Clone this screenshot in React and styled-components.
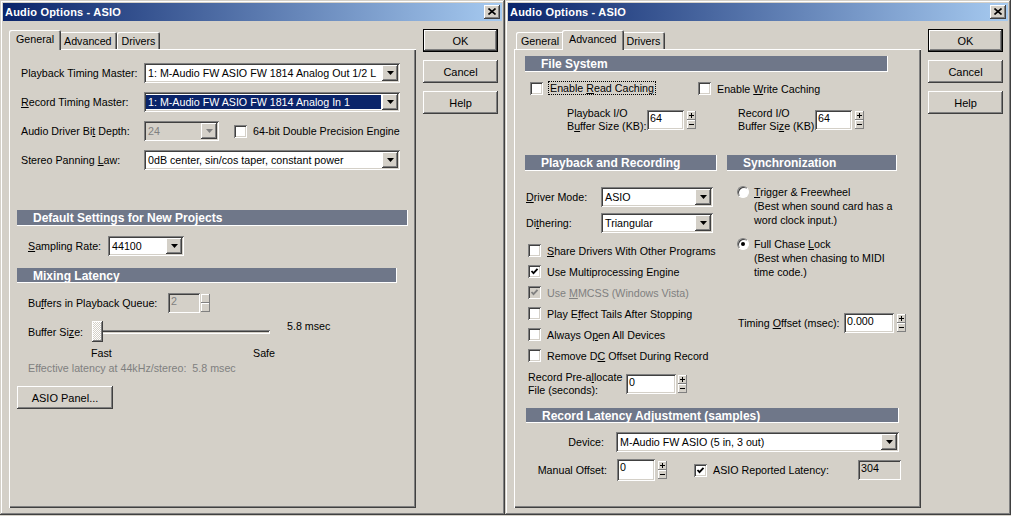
import { createGlobalStyle, styled, css } from 'styled-components';

const FACE = '#d4d0c8';
const BAR = '#6f7789';

const GlobalStyle = createGlobalStyle`
  * { box-sizing: border-box; }
  html, body { margin: 0; padding: 0; }
  body {
    background: ${FACE};
    font-family: "Liberation Sans", Arial, sans-serif;
    font-size: 10.7px;
    color: #000;
  }
`;

// classic 3d edges
const raised = css`
  background: ${FACE};
  box-shadow: inset -1px -1px #404040, inset 1px 1px #ffffff, inset -2px -2px #808080, inset 2px 2px ${FACE};
`;
const sunken = css`
  box-shadow: inset 1px 1px #808080, inset -1px -1px #ffffff, inset 2px 2px #404040, inset -2px -2px ${FACE};
`;

const Desktop = styled.div`
  display: flex;
  width: 1011px;
  height: 516px;
  overflow: hidden;
`;
const Window = styled.div`
  width: ${p => p.$width}px;
  height: 515px;
  padding: 3px;
  background: ${FACE};
  box-shadow: inset -1px -1px #404040, inset 1px 1px ${FACE}, inset -2px -2px #808080, inset 2px 2px #ffffff;
  display: flex;
  flex-direction: column;
`;
const TitleBar = styled.div`
  height: 18px;
  display: flex;
  align-items: center;
  justify-content: space-between;
  padding: 0 2px;
  background: linear-gradient(to right, #0a246a, #a6caf0);
`;
const Title = styled.span`
  color: #fff;
  font-weight: bold;
  font-size: 11px;
  letter-spacing: 0.2px;
`;
const CloseButton = styled.span`
  width: 16px;
  height: 14px;
  ${raised};
  display: flex;
  align-items: center;
  justify-content: center;
  padding-bottom: 1px;
`;
const Body = styled.div`
  display: flex;
  padding: 9px 0 0 6px;
  gap: 7px;
`;
const TabArea = styled.div`
  width: 407px;
  display: flex;
  flex-direction: column;
`;
const TabStrip = styled.div`
  display: flex;
  align-items: flex-end;
  height: 19px;
  padding-left: 2px;
  position: relative;
  z-index: 1;
`;
const Tab = styled.div`
  height: 17px;
  padding: 0 5px;
  display: flex;
  align-items: center;
  background: ${FACE};
  border-radius: 2px 2px 0 0;
  box-shadow: inset 1px 1px #ffffff, inset -1px 0 #404040, inset -2px 0 #808080;
  ${p => p.$active && css`
    height: 20px;
    margin: 0 -2px -1px;
    padding: 0 7px 3px;
    z-index: 2;
  `}
`;
const Panel = styled.div`
  height: 459px;
  background: ${FACE};
  box-shadow: inset 1px 1px #ffffff, inset -1px -1px #404040, inset -2px -2px #808080;
  display: flex;
  flex-direction: column;
  align-items: flex-start;
  padding: ${p => p.$pt}px 0 0 ${p => p.$pl}px;
`;
const ButtonColumn = styled.div`
  display: flex;
  flex-direction: column;
  gap: 8px;
  margin-top: -1px;
`;
const PushButton = styled.div`
  width: ${p => p.$w || 75}px;
  height: 23px;
  display: flex;
  align-items: center;
  justify-content: center;
  font-size: 11px;
  ${raised};
  margin-top: ${p => p.$mt || 0}px;
  ${p => p.$default && css`
    box-shadow: inset 0 0 0 1px #000, inset -2px -2px #404040, inset 2px 2px #ffffff, inset -3px -3px #808080;
  `}
`;

const FieldRow = styled.div`
  display: flex;
  align-items: center;
  height: ${p => p.$h || 20}px;
  margin-top: ${p => p.$mt || 0}px;
  margin-left: ${p => p.$ml || 0}px;
  white-space: nowrap;
`;
const FieldLabel = styled.span`
  width: ${p => p.$w}px;
  flex-shrink: 0;
  text-align: ${p => (p.$right ? 'right' : 'left')};
  padding-right: ${p => p.$pr || 0}px;
  color: ${p => (p.$dim ? '#808080' : '#000')};
`;
const LabelStack = styled.div`
  width: ${p => p.$w}px;
  flex-shrink: 0;
  line-height: 13px;
  margin-left: ${p => p.$ml || 0}px;
  display: flex;
  flex-direction: column;
`;
const SectionBar = styled.div`
  width: ${p => p.$w}px;
  height: ${p => p.$h || 16}px;
  margin-top: ${p => p.$mt || 0}px;
  margin-left: ${p => p.$ml || 0}px;
  background: ${BAR};
  box-shadow: inset -1px -1px #ffffff;
  color: #fff;
  font-weight: bold;
  font-size: 12px;
  display: flex;
  align-items: center;
  padding-left: 16px;
  white-space: nowrap;
`;

// combo box
const ComboBox = styled.div`
  width: ${p => p.$w}px;
  height: 20px;
  flex-shrink: 0;
  ${sunken};
  background-color: ${p => (p.$disabled ? FACE : '#fff')};
  display: flex;
  align-items: stretch;
  padding: 2px;
  margin-left: ${p => p.$ml || 0}px;
`;
const ComboText = styled.span`
  flex: 1;
  min-width: 0;
  display: flex;
  align-items: center;
  padding-left: 2px;
  margin: 1px 1px 1px 0;
  overflow: hidden;
  white-space: nowrap;
  color: ${p => (p.$selected ? '#fff' : p.$disabled ? '#808080' : '#000')};
  background: ${p => (p.$selected ? '#0a246a' : 'transparent')};
`;
const DropButton = styled.span`
  width: 16px;
  flex-shrink: 0;
  ${raised};
  display: flex;
  align-items: center;
  justify-content: center;
`;

function Combo({ width, value, disabled, selected, ml }) {
  return (
    <ComboBox $w={width} $disabled={disabled} $ml={ml}>
      <ComboText $selected={selected} $disabled={disabled}>{value}</ComboText>
      <DropButton>
        <svg width="7" height="4" viewBox="0 0 7 4">
          <polygon points="0,0 7,0 3.5,4" fill={disabled ? '#808080' : '#000'} />
        </svg>
      </DropButton>
    </ComboBox>
  );
}

// edit box + spinner
const TextBox = styled.div`
  width: ${p => p.$w}px;
  height: ${p => p.$h || 20}px;
  flex-shrink: 0;
  ${sunken};
  background-color: ${p => (p.$disabled || p.$readonly ? FACE : '#fff')};
  color: ${p => (p.$disabled ? '#808080' : '#000')};
  padding: 2px 3px;
  line-height: 13px;
  margin-left: ${p => p.$ml || 0}px;
`;
const SpinBox = styled.div`
  width: 9px;
  height: 18px;
  margin-left: ${p => p.$ml || 2}px;
  display: flex;
  flex-direction: column;
`;
const SpinHalf = styled.span`
  flex: 1;
  background: ${FACE};
  box-shadow: inset -1px -1px #808080, inset 1px 1px #ffffff;
  display: flex;
  align-items: center;
  justify-content: center;
`;

function Spinner({ ml, disabled }) {
  const c = disabled ? '#a0a0a0' : '#000';
  return (
    <SpinBox $ml={ml}>
      <SpinHalf>
        {!disabled && (
          <svg width="5" height="5" viewBox="0 0 5 5">
            <path d="M0 2.5H5M2.5 0V5" stroke={c} strokeWidth="1" />
          </svg>
        )}
      </SpinHalf>
      <SpinHalf>
        {!disabled && (
          <svg width="5" height="5" viewBox="0 0 5 5">
            <path d="M0 2.5H5" stroke={c} strokeWidth="1" />
          </svg>
        )}
      </SpinHalf>
    </SpinBox>
  );
}

// checkbox
const CheckItem = styled.label`
  display: flex;
  align-items: center;
  height: 13px;
  gap: 6px;
  width: ${p => (p.$w ? `${p.$w}px` : 'auto')};
  margin-top: ${p => p.$mt || 0}px;
  margin-left: ${p => p.$ml || 0}px;
  white-space: nowrap;
  color: ${p => (p.$disabled ? '#808080' : '#000')};
`;
const CheckBoxSquare = styled.span`
  width: 13px;
  height: 13px;
  flex-shrink: 0;
  ${sunken};
  background-color: ${p => (p.$disabled ? FACE : '#fff')};
  display: flex;
  align-items: center;
  justify-content: center;
`;
const Focus = styled.span`
  outline: 1px dotted #000;
  padding: 0 1px;
  line-height: 13px;
`;

function Check({ checked, disabled, children, ...rest }) {
  return (
    <CheckItem $disabled={disabled} {...rest}>
      <CheckBoxSquare $disabled={disabled}>
        {checked && (
          <svg width="9" height="9" viewBox="0 0 9 9">
            <path d="M1.5 4 L3.5 6.2 L7.5 1.8" fill="none" stroke={disabled ? '#808080' : '#000'} strokeWidth="1.8" />
          </svg>
        )}
      </CheckBoxSquare>
      <span>{children}</span>
    </CheckItem>
  );
}

// radio button
const RadioOption = styled.div`
  display: flex;
  align-items: flex-start;
  margin-top: ${p => p.$mt || 0}px;
  margin-left: ${p => p.$ml || 0}px;
  line-height: 14px;
`;
const RadioDot = styled.span`
  width: 12px;
  height: 12px;
  margin-top: 1px;
  flex-shrink: 0;
  border-radius: 50%;
  background: #fff;
  border: 1px solid;
  border-color: #808080 #ffffff #ffffff #808080;
  box-shadow: inset 1px 1px #404040;
  display: flex;
  align-items: center;
  justify-content: center;
  &::after {
    content: '';
    width: 4px;
    height: 4px;
    border-radius: 50%;
    background: ${p => (p.$checked ? '#000' : 'transparent')};
  }
`;
const RadioText = styled.div`
  margin-left: 5px;
  display: flex;
  flex-direction: column;
`;

// slider
const Slider = styled.div`
  width: ${p => p.$w}px;
  height: 21px;
  position: relative;
  display: flex;
  align-items: center;
  padding-left: 5px;
`;
const SliderTrack = styled.span`
  flex: 1;
  height: 4px;
  ${sunken};
  background: ${FACE};
`;
const SliderThumb = styled.span`
  position: absolute;
  left: 0;
  top: 0;
  width: 11px;
  height: 21px;
  background: repeating-conic-gradient(#ffffff 0 25%, ${FACE} 0 50%) 0 0 / 2px 2px;
  box-shadow: inset -1px -1px #404040, inset 1px 1px #ffffff, inset -2px -2px #808080;
`;
const Note = styled.span`
  margin-left: ${p => p.$ml || 0}px;
  align-self: flex-start;
  margin-top: ${p => p.$dy || 0}px;
`;
const ScaleRow = styled.div`
  display: flex;
  justify-content: space-between;
  width: ${p => p.$w}px;
  margin-left: ${p => p.$ml}px;
  margin-top: ${p => p.$mt}px;
  line-height: 13px;
`;
const Hint = styled.div`
  color: #808080;
  line-height: 13px;
  margin-left: ${p => p.$ml}px;
  margin-top: ${p => p.$mt}px;
  white-space: nowrap;
`;

const Columns = styled.div`
  display: grid;
  grid-template-columns: 192px 170px;
  column-gap: 10px;
  align-items: start;
  margin-top: ${p => p.$mt}px;
  margin-left: ${p => p.$ml}px;
`;
const Column = styled.div`
  display: flex;
  flex-direction: column;
  align-items: flex-start;
`;
const CheckList = styled.div`
  display: flex;
  flex-direction: column;
  gap: 8px;
  margin-top: ${p => p.$mt}px;
  margin-left: ${p => p.$ml}px;
`;
const LatencyRow = styled(FieldRow)`
  width: 375px;
`;
const ReadOnlyBox = styled(TextBox)`
  margin-left: auto;
`;

function CloseGlyph() {
  return (
    <svg width="8" height="7" viewBox="0 0 8 7">
      <path d="M0.5 0.5 L7.5 6.5 M7.5 0.5 L0.5 6.5" stroke="#000" strokeWidth="1.6" />
    </svg>
  );
}

function Frame({ width, active, children }) {
  return (
    <Window $width={width}>
      <TitleBar>
        <Title>Audio Options - ASIO</Title>
        <CloseButton><CloseGlyph /></CloseButton>
      </TitleBar>
      <Body>
        <TabArea>
          <TabStrip>
            {['General', 'Advanced', 'Drivers'].map(t => (
              <Tab key={t} $active={t === active}>{t}</Tab>
            ))}
          </TabStrip>
          {children}
        </TabArea>
        <ButtonColumn>
          <PushButton $default>OK</PushButton>
          <PushButton>Cancel</PushButton>
          <PushButton>Help</PushButton>
        </ButtonColumn>
      </Body>
    </Window>
  );
}

function GeneralPage() {
  return (
    <Panel $pt={14} $pl={8}>
      <FieldRow $ml={4}>
        <FieldLabel $w={123}>Playback Timing Master:</FieldLabel>
        <Combo width={256} value="1: M-Audio FW ASIO FW 1814 Analog Out 1/2 L" />
      </FieldRow>
      <FieldRow $ml={4} $mt={9}>
        <FieldLabel $w={123}><u>R</u>ecord Timing Master:</FieldLabel>
        <Combo width={256} value="1: M-Audio FW ASIO FW 1814 Analog In 1" selected />
      </FieldRow>
      <FieldRow $ml={4} $mt={9}>
        <FieldLabel $w={123}>Audio Driver Bi<u>t</u> Depth:</FieldLabel>
        <Combo width={75} value="24" disabled />
        <Check $ml={15}>64-bit Double Precision Engine</Check>
      </FieldRow>
      <FieldRow $ml={4} $mt={9}>
        <FieldLabel $w={123}>Stereo Panning <u>L</u>aw:</FieldLabel>
        <Combo width={256} value="0dB center, sin/cos taper, constant power" />
      </FieldRow>

      <SectionBar $w={391} $mt={40}>Default Settings for New Projects</SectionBar>
      <FieldRow $ml={11} $mt={10}>
        <FieldLabel $w={80}><u>S</u>ampling Rate:</FieldLabel>
        <Combo width={76} value="44100" />
      </FieldRow>

      <SectionBar $w={380} $h={15} $mt={12}>Mixing Latency</SectionBar>
      <FieldRow $ml={11} $mt={10}>
        <FieldLabel $w={140}>Bu<u>f</u>fers in Playback Queue:</FieldLabel>
        <TextBox $w={32} $disabled>2</TextBox>
        <Spinner ml={1} disabled />
      </FieldRow>
      <FieldRow $ml={11} $mt={8} $h={21}>
        <FieldLabel $w={64}>Buffer Si<u>z</u>e:</FieldLabel>
        <Slider $w={178}>
          <SliderTrack />
          <SliderThumb />
        </Slider>
        <Note $ml={17} $dy={-1}>5.8 msec</Note>
      </FieldRow>
      <ScaleRow $w={184} $ml={74} $mt={5}>
        <span>Fast</span>
        <span>Safe</span>
      </ScaleRow>
      <Hint $ml={11} $mt={2}>Effective latency at 44kHz/stereo:&nbsp; 5.8 msec</Hint>
      <PushButton $w={96} $mt={11}>ASIO Panel...</PushButton>
    </Panel>
  );
}

function AdvancedPage() {
  return (
    <Panel $pt={7} $pl={0}>
      <SectionBar $w={363} $ml={11}>File System</SectionBar>
      <FieldRow $ml={16} $mt={10} $h={13}>
        <Check $w={168}><Focus>Enable <u>R</u>ead Caching</Focus></Check>
        <Check>Enable <u>W</u>rite Caching</Check>
      </FieldRow>
      <FieldRow $ml={53} $mt={15}>
        <LabelStack $w={80}>
          <span>Playback I/O</span>
          <span>B<u>u</u>ffer Size (KB):</span>
        </LabelStack>
        <TextBox $w={37}>64</TextBox>
        <Spinner ml={3} />
        <LabelStack $w={77} $ml={42}>
          <span>Record I/O</span>
          <span>Buffer Si<u>z</u>e (KB):</span>
        </LabelStack>
        <TextBox $w={37}>64</TextBox>
        <Spinner ml={3} />
      </FieldRow>

      <Columns $mt={25} $ml={11}>
        <Column>
          <SectionBar $w={192}>Playback and Recording</SectionBar>
          <FieldRow $ml={1} $mt={16}>
            <FieldLabel $w={75}><u>D</u>river Mode:</FieldLabel>
            <Combo width={112} value="ASIO" />
          </FieldRow>
          <FieldRow $ml={1} $mt={6}>
            <FieldLabel $w={75}>Di<u>t</u>hering:</FieldLabel>
            <Combo width={112} value="Triangular" />
          </FieldRow>
          <CheckList $mt={11} $ml={3}>
            <Check><u>S</u>hare Drivers With Other Programs</Check>
            <Check checked>Use Multiprocessing Engine</Check>
            <Check checked disabled>Use <u>M</u>MCSS (Windows Vista)</Check>
            <Check>Play E<u>f</u>fect Tails After Stopping</Check>
            <Check>Always O<u>p</u>en All Devices</Check>
            <Check>Remove D<u>C</u> Offset During Record</Check>
          </CheckList>
          <FieldRow $ml={3} $mt={12}>
            <LabelStack $w={98}>
              <span>Record Pre-a<u>l</u>locate</span>
              <span>File (seconds):</span>
            </LabelStack>
            <TextBox $w={50}>0</TextBox>
            <Spinner ml={2} />
          </FieldRow>
        </Column>
        <Column>
          <SectionBar $w={170}>Synchronization</SectionBar>
          <RadioOption $ml={10} $mt={14}>
            <RadioDot />
            <RadioText>
              <span><u>T</u>rigger &amp; Freewheel</span>
              <span>(Best when sound card has a</span>
              <span>word clock input.)</span>
            </RadioText>
          </RadioOption>
          <RadioOption $ml={10} $mt={10}>
            <RadioDot $checked />
            <RadioText>
              <span>Full Chase <u>L</u>ock</span>
              <span>(Best when chasing to MIDI</span>
              <span>time code.)</span>
            </RadioText>
          </RadioOption>
          <FieldRow $ml={11} $mt={34}>
            <FieldLabel $w={106}>Timing <u>O</u>ffset (msec):</FieldLabel>
            <TextBox $w={50}>0.000</TextBox>
            <Spinner ml={3} />
          </FieldRow>
        </Column>
      </Columns>

      <SectionBar $w={373} $h={15} $ml={12} $mt={14}>Record Latency Adjustment (samples)</SectionBar>
      <FieldRow $ml={12} $mt={9}>
        <FieldLabel $w={90} $right $pr={12}>Device:</FieldLabel>
        <Combo width={283} value="M-Audio FW ASIO (5 in, 3 out)" />
      </FieldRow>
      <LatencyRow $ml={12} $mt={7} $h={22}>
        <FieldLabel $w={91} $right $pr={10}>Manual Offset:</FieldLabel>
        <TextBox $w={38} $h={22}>0</TextBox>
        <Spinner ml={3} />
        <Check $ml={27} checked>ASIO Reported Latency:</Check>
        <ReadOnlyBox $w={43} $readonly>304</ReadOnlyBox>
      </LatencyRow>
    </Panel>
  );
}

export default function App() {
  return (
    <>
      <GlobalStyle />
      <Desktop>
        <Frame width={505} active="General">
          <GeneralPage />
        </Frame>
        <Frame width={506} active="Advanced">
          <AdvancedPage />
        </Frame>
      </Desktop>
    </>
  );
}
